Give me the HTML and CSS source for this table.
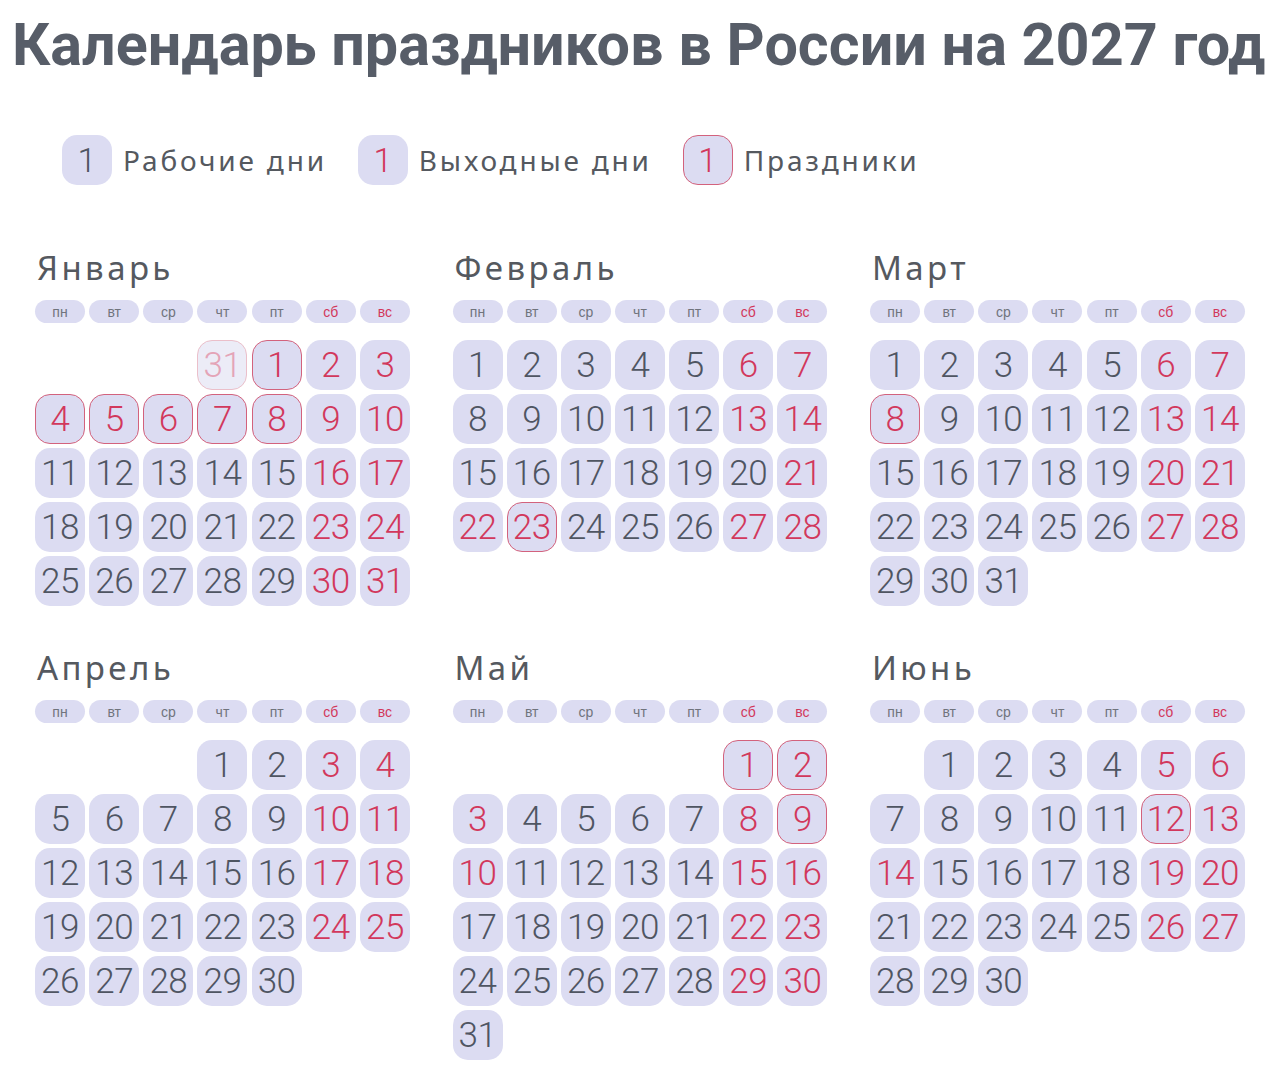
FILE: index.html
```html
<!DOCTYPE html>
<html lang="ru">
<head>
<meta charset="utf-8">
<title>Календарь праздников в России на 2027 год</title>
<link rel="stylesheet" href="styles.css">
</head>
<body>
<h1 class="title">Календарь праздников в России на 2027 год</h1>

<div class="legend">
  <div class="legend-item"><span class="lbox">1</span><span class="ltext">Рабочие дни</span></div>
  <div class="legend-item"><span class="lbox r">1</span><span class="ltext">Выходные дни</span></div>
  <div class="legend-item"><span class="lbox h">1</span><span class="ltext">Праздники</span></div>
</div>

<div class="months">
  <section class="month">
    <h2 class="mname">Январь</h2>
    <div class="wdays"><span>пн</span><span>вт</span><span>ср</span><span>чт</span><span>пт</span><span class="r">сб</span><span class="r">вс</span></div>
    <div class="days">
      <span class="e"></span><span class="e"></span><span class="e"></span><span class="d f">31</span><span class="d h">1</span><span class="d r">2</span><span class="d r">3</span>
      <span class="d h">4</span><span class="d h">5</span><span class="d h">6</span><span class="d h">7</span><span class="d h">8</span><span class="d r">9</span><span class="d r">10</span>
      <span class="d">11</span><span class="d">12</span><span class="d">13</span><span class="d">14</span><span class="d">15</span><span class="d r">16</span><span class="d r">17</span>
      <span class="d">18</span><span class="d">19</span><span class="d">20</span><span class="d">21</span><span class="d">22</span><span class="d r">23</span><span class="d r">24</span>
      <span class="d">25</span><span class="d">26</span><span class="d">27</span><span class="d">28</span><span class="d">29</span><span class="d r">30</span><span class="d r">31</span>
    </div>
  </section>

  <section class="month">
    <h2 class="mname">Февраль</h2>
    <div class="wdays"><span>пн</span><span>вт</span><span>ср</span><span>чт</span><span>пт</span><span class="r">сб</span><span class="r">вс</span></div>
    <div class="days">
      <span class="d">1</span><span class="d">2</span><span class="d">3</span><span class="d">4</span><span class="d">5</span><span class="d r">6</span><span class="d r">7</span>
      <span class="d">8</span><span class="d">9</span><span class="d">10</span><span class="d">11</span><span class="d">12</span><span class="d r">13</span><span class="d r">14</span>
      <span class="d">15</span><span class="d">16</span><span class="d">17</span><span class="d">18</span><span class="d">19</span><span class="d">20</span><span class="d r">21</span>
      <span class="d r">22</span><span class="d h">23</span><span class="d">24</span><span class="d">25</span><span class="d">26</span><span class="d r">27</span><span class="d r">28</span>
    </div>
  </section>

  <section class="month">
    <h2 class="mname">Март</h2>
    <div class="wdays"><span>пн</span><span>вт</span><span>ср</span><span>чт</span><span>пт</span><span class="r">сб</span><span class="r">вс</span></div>
    <div class="days">
      <span class="d">1</span><span class="d">2</span><span class="d">3</span><span class="d">4</span><span class="d">5</span><span class="d r">6</span><span class="d r">7</span>
      <span class="d h">8</span><span class="d">9</span><span class="d">10</span><span class="d">11</span><span class="d">12</span><span class="d r">13</span><span class="d r">14</span>
      <span class="d">15</span><span class="d">16</span><span class="d">17</span><span class="d">18</span><span class="d">19</span><span class="d r">20</span><span class="d r">21</span>
      <span class="d">22</span><span class="d">23</span><span class="d">24</span><span class="d">25</span><span class="d">26</span><span class="d r">27</span><span class="d r">28</span>
      <span class="d">29</span><span class="d">30</span><span class="d">31</span>
    </div>
  </section>

  <section class="month">
    <h2 class="mname">Апрель</h2>
    <div class="wdays"><span>пн</span><span>вт</span><span>ср</span><span>чт</span><span>пт</span><span class="r">сб</span><span class="r">вс</span></div>
    <div class="days">
      <span class="e"></span><span class="e"></span><span class="e"></span><span class="d">1</span><span class="d">2</span><span class="d r">3</span><span class="d r">4</span>
      <span class="d">5</span><span class="d">6</span><span class="d">7</span><span class="d">8</span><span class="d">9</span><span class="d r">10</span><span class="d r">11</span>
      <span class="d">12</span><span class="d">13</span><span class="d">14</span><span class="d">15</span><span class="d">16</span><span class="d r">17</span><span class="d r">18</span>
      <span class="d">19</span><span class="d">20</span><span class="d">21</span><span class="d">22</span><span class="d">23</span><span class="d r">24</span><span class="d r">25</span>
      <span class="d">26</span><span class="d">27</span><span class="d">28</span><span class="d">29</span><span class="d">30</span>
    </div>
  </section>

  <section class="month">
    <h2 class="mname">Май</h2>
    <div class="wdays"><span>пн</span><span>вт</span><span>ср</span><span>чт</span><span>пт</span><span class="r">сб</span><span class="r">вс</span></div>
    <div class="days">
      <span class="e"></span><span class="e"></span><span class="e"></span><span class="e"></span><span class="e"></span><span class="d h">1</span><span class="d h">2</span>
      <span class="d r">3</span><span class="d">4</span><span class="d">5</span><span class="d">6</span><span class="d">7</span><span class="d r">8</span><span class="d h">9</span>
      <span class="d r">10</span><span class="d">11</span><span class="d">12</span><span class="d">13</span><span class="d">14</span><span class="d r">15</span><span class="d r">16</span>
      <span class="d">17</span><span class="d">18</span><span class="d">19</span><span class="d">20</span><span class="d">21</span><span class="d r">22</span><span class="d r">23</span>
      <span class="d">24</span><span class="d">25</span><span class="d">26</span><span class="d">27</span><span class="d">28</span><span class="d r">29</span><span class="d r">30</span>
      <span class="d">31</span>
    </div>
  </section>

  <section class="month">
    <h2 class="mname">Июнь</h2>
    <div class="wdays"><span>пн</span><span>вт</span><span>ср</span><span>чт</span><span>пт</span><span class="r">сб</span><span class="r">вс</span></div>
    <div class="days">
      <span class="e"></span><span class="d">1</span><span class="d">2</span><span class="d">3</span><span class="d">4</span><span class="d r">5</span><span class="d r">6</span>
      <span class="d">7</span><span class="d">8</span><span class="d">9</span><span class="d">10</span><span class="d">11</span><span class="d h">12</span><span class="d r">13</span>
      <span class="d r">14</span><span class="d">15</span><span class="d">16</span><span class="d">17</span><span class="d">18</span><span class="d r">19</span><span class="d r">20</span>
      <span class="d">21</span><span class="d">22</span><span class="d">23</span><span class="d">24</span><span class="d">25</span><span class="d r">26</span><span class="d r">27</span>
      <span class="d">28</span><span class="d">29</span><span class="d">30</span>
    </div>
  </section>
</div>
</body>
</html>
```

FILE: styles.css
```css
* { box-sizing: border-box; }

body {
  margin: 0;
  background: #ffffff;
  width: 1280px;
  font-family: "Noto Sans", "DejaVu Sans", sans-serif;
  color: #4f5562;
}

.title {
  margin: 0;
  padding: 14px 0 0 12px;
  font-family: Roboto, "Liberation Sans", sans-serif;
  font-weight: 700;
  font-size: 59.3px;
  line-height: 62px;
  color: #575d68;
  white-space: nowrap;
}

.legend {
  display: flex;
  gap: 31px;
  margin: 59px 0 0 62px;
  height: 50px;
}

.legend-item {
  display: flex;
  align-items: center;
  gap: 11px;
}

.lbox {
  width: 50px;
  height: 50px;
  border-radius: 15px;
  background: #dcdcf2;
  display: flex;
  align-items: center;
  justify-content: center;
  font-family: Roboto, sans-serif;
  font-weight: 300;
  font-size: 34px;
  color: #4f5562;
}

.lbox.r { color: #d2385c; }
.lbox.h { color: #d2385c; border: 1px solid #d3627d; }

.ltext {
  font-family: "Noto Sans", sans-serif;
  font-size: 28px;
  letter-spacing: 2.8px;
  color: #55595f;
}

.months {
  display: grid;
  grid-template-columns: repeat(3, 375px);
  column-gap: 42.5px;
  row-gap: 40px;
  margin: 61px 0 0 35px;
  align-items: start;
}

.mname {
  margin: 0;
  height: 44px;
  line-height: 44px;
  font-family: "Noto Sans", sans-serif;
  font-weight: 400;
  font-size: 33px;
  letter-spacing: 3.4px;
  color: #55595f;
  padding-left: 2px;
}

.wdays {
  display: grid;
  grid-template-columns: repeat(7, 50px);
  column-gap: 4.17px;
  margin-top: 10px;
}

.wdays span {
  height: 23px;
  border-radius: 12px;
  background: #dcdcf2;
  display: flex;
  align-items: center;
  justify-content: center;
  font-family: "Liberation Sans", Arial, sans-serif;
  font-size: 14px;
  color: #70747d;
}

.wdays span.r { color: #d2385c; }

.days {
  display: grid;
  grid-template-columns: repeat(7, 50px);
  grid-auto-rows: 50px;
  column-gap: 4.17px;
  row-gap: 4px;
  margin-top: 17px;
}

.d {
  border-radius: 15px;
  background: #dcdcf2;
  display: flex;
  align-items: center;
  justify-content: center;
  font-family: Roboto, sans-serif;
  font-weight: 300;
  font-size: 35px;
  letter-spacing: -0.5px;
  color: #4f5562;
}

.d.r { color: #d2385c; }
.d.h { color: #d2385c; border: 1px solid #d3627d; }
.d.f { background: #ececf7; color: #e4a4b7; border: 1px solid #ebbfca; }
```
